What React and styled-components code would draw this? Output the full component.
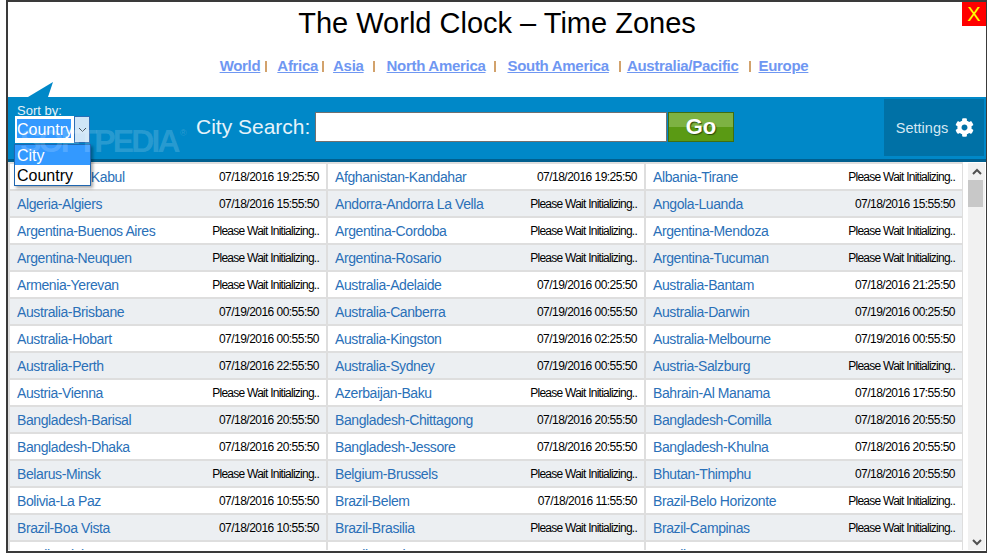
import { Fragment } from 'react';
import styled, { createGlobalStyle } from 'styled-components';
import { FaCog } from 'react-icons/fa';

const WAIT = 'Please Wait Initializing..';

const cities = [
  ['Afghanistan-Kabul', '07/18/2016 19:25:50'], ['Afghanistan-Kandahar', '07/18/2016 19:25:50'], ['Albania-Tirane', WAIT],
  ['Algeria-Algiers', '07/18/2016 15:55:50'], ['Andorra-Andorra La Vella', WAIT], ['Angola-Luanda', '07/18/2016 15:55:50'],
  ['Argentina-Buenos Aires', WAIT], ['Argentina-Cordoba', WAIT], ['Argentina-Mendoza', WAIT],
  ['Argentina-Neuquen', WAIT], ['Argentina-Rosario', WAIT], ['Argentina-Tucuman', WAIT],
  ['Armenia-Yerevan', WAIT], ['Australia-Adelaide', '07/19/2016 00:25:50'], ['Australia-Bantam', '07/18/2016 21:25:50'],
  ['Australia-Brisbane', '07/19/2016 00:55:50'], ['Australia-Canberra', '07/19/2016 00:55:50'], ['Australia-Darwin', '07/19/2016 00:25:50'],
  ['Australia-Hobart', '07/19/2016 00:55:50'], ['Australia-Kingston', '07/19/2016 02:25:50'], ['Australia-Melbourne', '07/19/2016 00:55:50'],
  ['Australia-Perth', '07/18/2016 22:55:50'], ['Australia-Sydney', '07/19/2016 00:55:50'], ['Austria-Salzburg', WAIT],
  ['Austria-Vienna', WAIT], ['Azerbaijan-Baku', WAIT], ['Bahrain-Al Manama', '07/18/2016 17:55:50'],
  ['Bangladesh-Barisal', '07/18/2016 20:55:50'], ['Bangladesh-Chittagong', '07/18/2016 20:55:50'], ['Bangladesh-Comilla', '07/18/2016 20:55:50'],
  ['Bangladesh-Dhaka', '07/18/2016 20:55:50'], ['Bangladesh-Jessore', '07/18/2016 20:55:50'], ['Bangladesh-Khulna', '07/18/2016 20:55:50'],
  ['Belarus-Minsk', WAIT], ['Belgium-Brussels', WAIT], ['Bhutan-Thimphu', '07/18/2016 20:55:50'],
  ['Bolivia-La Paz', '07/18/2016 10:55:50'], ['Brazil-Belem', '07/18/2016 11:55:50'], ['Brazil-Belo Horizonte', WAIT],
  ['Brazil-Boa Vista', '07/18/2016 10:55:50'], ['Brazil-Brasilia', WAIT], ['Brazil-Campinas', WAIT],
  ['Brazil-Cuiaba', WAIT], ['Brazil-Fortaleza', WAIT], ['Brazil-Manaus', WAIT],
];

const regions = [
  { name: 'World', before: 5, after: 10 },
  { name: 'Africa', before: 4, after: 9 },
  { name: 'Asia', before: 9, after: 12 },
  { name: 'North America', before: 9, after: 11 },
  { name: 'South America', before: 10, after: 6 },
  { name: 'Australia/Pacific', before: 10, after: 8 },
  { name: 'Europe' },
];

const GlobalStyle = createGlobalStyle`
  html, body { margin: 0; padding: 0; background: #fff; }
  body { font-family: "Liberation Sans", Arial, sans-serif; }
`;

const Frame = styled.div`
  box-sizing: border-box;
  width: 981px;
  height: 553px;
  margin-left: 6px;
  border: 2px solid #3a3a3a;
  border-right-width: 1px;
  background: #fff;
  display: flex;
  flex-direction: column;
  overflow: hidden;
  position: relative;
`;

const Header = styled.header`
  height: 95px;
  flex: none;
  position: relative;
  display: flex;
  flex-direction: column;
  align-items: center;
`;

const Title = styled.h1`
  margin: 3px 0 0;
  font-size: 29px;
  line-height: 36px;
  font-weight: 400;
  color: #000;
`;

const Nav = styled.nav`
  margin: 16px 0 0 34px;
  display: flex;
  align-items: center;
  font-size: 15px;
  line-height: 18px;
  font-weight: 700;
  letter-spacing: -0.3px;
`;

const NavLink = styled.a`
  color: #6f97f2;
  text-decoration: underline;
`;

const NavSep = styled.span`
  width: 2px;
  height: 11px;
  background: #d2a26c;
  margin: 1px ${p => p.$after}px 0 ${p => p.$before}px;
`;

const CloseButton = styled.button`
  position: absolute;
  top: 0;
  right: 0;
  width: 24px;
  height: 24px;
  padding: 0;
  border: 0;
  background: #f00;
  color: #ff0;
  font: 400 20px/24px "Liberation Sans", Arial, sans-serif;
`;

const Pointer = styled.svg`
  position: absolute;
  left: 20px;
  bottom: 0;
`;

const Bar = styled.div`
  height: 65px;
  flex: none;
  box-sizing: border-box;
  border-bottom: 3px solid #005f8f;
  background: #0088c8;
  display: flex;
  position: relative;
`;

const SortGroup = styled.div`
  width: 188px;
  flex: none;
  padding: 6px 0 0 7px;
  box-sizing: border-box;
  position: relative;
`;

const SortLabel = styled.div`
  margin-left: 2px;
  font-size: 13px;
  line-height: 13px;
  padding-top: 1px;
  height: 12px;
  color: #e4f1f8;
`;

const SelectBox = styled.div`
  display: flex;
  height: 27px;
  width: 75px;
`;

const SelectValue = styled.div`
  width: 59px;
  box-sizing: border-box;
  background: #fff;
  padding: 3px 2px 5px;
  span {
    display: block;
    width: 54px;
    height: 19px;
    background: #3399ff;
    color: #fff;
    font-size: 16px;
    line-height: 21px;
    white-space: nowrap;
  }
`;

const SelectArrow = styled.div`
  width: 16px;
  box-sizing: border-box;
  border: 1px solid #2a6db5;
  background: #cfe5f7;
  display: flex;
  align-items: center;
  justify-content: center;
`;

const SelectList = styled.ul`
  position: absolute;
  z-index: 3;
  left: 6px;
  top: 47px;
  width: 77px;
  margin: 0;
  padding: 0;
  box-sizing: border-box;
  list-style: none;
  background: #fff;
  border: 1px solid #1f66b0;
  box-shadow: 2px 2px 3px rgba(0, 0, 0, 0.35);
`;

const SelectOption = styled.li`
  height: 20px;
  padding-left: 2px;
  font-size: 16px;
  line-height: 22px;
  color: ${p => (p.$active ? '#fff' : '#000')};
  background: ${p => (p.$active ? '#3399ff' : '#fff')};
`;

const Watermark = styled.div`
  position: absolute;
  z-index: 4;
  left: 12px;
  top: 28px;
  font-size: 32px;
  line-height: 32px;
  font-weight: 700;
  letter-spacing: -2.8px;
  color: rgba(255, 255, 255, 0.17);
  pointer-events: none;
  white-space: nowrap;
  sup {
    font-size: 9px;
    font-weight: 400;
    letter-spacing: 0;
    margin-left: 2px;
    vertical-align: 16px;
    line-height: 0;
  }
`;

const SearchLabel = styled.label`
  margin-top: 17px;
  width: 119px;
  flex: none;
  font-size: 21px;
  line-height: 26px;
  color: #e6f3fa;
`;

const SearchInput = styled.input`
  width: 352px;
  height: 30px;
  margin-top: 15px;
  flex: none;
  box-sizing: border-box;
  border: 1px solid #707070;
  background: #fff;
`;

const GoButton = styled.button`
  width: 66px;
  height: 30px;
  margin-top: 15px;
  margin-left: 1px;
  flex: none;
  padding: 0;
  box-sizing: border-box;
  border: 1px solid #3f6d12;
  background: linear-gradient(#7db243 0 50%, #5a9a14 50% 100%);
  color: #fff;
  font: 700 22px/26px "Liberation Sans", Arial, sans-serif;
  text-shadow: 1px 1px 1px #2c4a0a;
`;

const SettingsPanel = styled.div`
  margin: 2px 2px 3px auto;
  width: 100px;
  box-sizing: border-box;
  padding-left: 2px;
  background: #0071a6;
  display: flex;
  align-items: center;
  justify-content: center;
  gap: 7px;
  font-size: 14.5px;
  color: #d4e8f3;
  svg {
    color: #fff;
    font-size: 19px;
  }
`;

const Main = styled.main`
  flex: 1;
  min-height: 0;
  display: flex;
  overflow: hidden;
  margin-bottom: 1px;
`;

const CityGrid = styled.div`
  width: 955px;
  flex: none;
  display: grid;
  grid-template-columns: repeat(3, 316px);
  grid-auto-rows: 27px;
  column-gap: 2px;
  padding: 2px 0 0 2px;
  box-sizing: border-box;
  align-content: start;
  background: #dedede;
`;

const CityCell = styled.div`
  box-sizing: border-box;
  background: ${p => (p.$odd ? '#eceff2' : '#fff')};
  border-bottom: 2px solid #dedede;
  padding: 0 7px;
  display: flex;
  align-items: center;
  justify-content: space-between;
  white-space: nowrap;
`;

const CityName = styled.a`
  font-size: 14px;
  letter-spacing: -0.4px;
  color: #2a70b8;
`;

const CityTime = styled.span`
  font-size: 12px;
  letter-spacing: ${p => (p.$wait ? '-0.75px' : '-0.53px')};
  color: #000;
`;

const Scrollbar = styled.div`
  flex: 1;
  margin: 1px 1px 0 5px;
  background: #f1f1f1;
  display: flex;
  flex-direction: column;
  align-items: center;
`;

const ScrollButton = styled.div`
  height: 17px;
  width: 100%;
  flex: none;
  display: flex;
  align-items: center;
  justify-content: center;
  margin-top: ${p => (p.$bottom ? 'auto' : '0')};
`;

const ScrollThumb = styled.div`
  width: 15px;
  height: 27px;
  margin: 0 2px 0 0;
  background: #c8c8c8;
`;

function Chevron({ up }) {
  return (
    <svg width="10" height="8" viewBox="0 0 10 8">
      <path d={up ? 'M1 6 L5 2 L9 6' : 'M1 2 L5 6 L9 2'} fill="none" stroke="#505050" strokeWidth="2" />
    </svg>
  );
}

export default function App() {
  return (
    <>
      <GlobalStyle />
      <Frame>
        <Header>
          <Title>The World Clock – Time Zones</Title>
          <Nav>
            {regions.map(r => (
              <Fragment key={r.name}>
                <NavLink>{r.name}</NavLink>
                {r.after && <NavSep $before={r.before} $after={r.after} />}
              </Fragment>
            ))}
          </Nav>
          <CloseButton>X</CloseButton>
          <Pointer width="25" height="15" viewBox="0 0 25 15">
            <path d="M0 15 L25 0 L20 15 Z" fill="#0088c8" />
          </Pointer>
        </Header>
        <Bar>
          <SortGroup>
            <SortLabel>Sort by:</SortLabel>
            <SelectBox>
              <SelectValue><span>Country</span></SelectValue>
              <SelectArrow>
                <svg width="9" height="6" viewBox="0 0 9 6">
                  <path d="M1 1 L4.5 4.5 L8 1" fill="none" stroke="#44525e" strokeWidth="1" />
                </svg>
              </SelectArrow>
            </SelectBox>
            <SelectList>
              <SelectOption $active>City</SelectOption>
              <SelectOption>Country</SelectOption>
            </SelectList>
            <Watermark>SOFTPEDIA<sup>®</sup></Watermark>
          </SortGroup>
          <SearchLabel>City Search:</SearchLabel>
          <SearchInput />
          <GoButton>Go</GoButton>
          <SettingsPanel>
            Settings <FaCog />
          </SettingsPanel>
        </Bar>
        <Main>
          <CityGrid>
            {cities.map(([name, time], i) => (
              <CityCell key={name} $odd={Math.floor(i / 3) % 2 === 1}>
                <CityName>{name}</CityName>
                <CityTime $wait={time === WAIT}>{time}</CityTime>
              </CityCell>
            ))}
          </CityGrid>
          <Scrollbar>
            <ScrollButton><Chevron up /></ScrollButton>
            <ScrollThumb />
            <ScrollButton $bottom><Chevron /></ScrollButton>
          </Scrollbar>
        </Main>
      </Frame>
    </>
  );
}
